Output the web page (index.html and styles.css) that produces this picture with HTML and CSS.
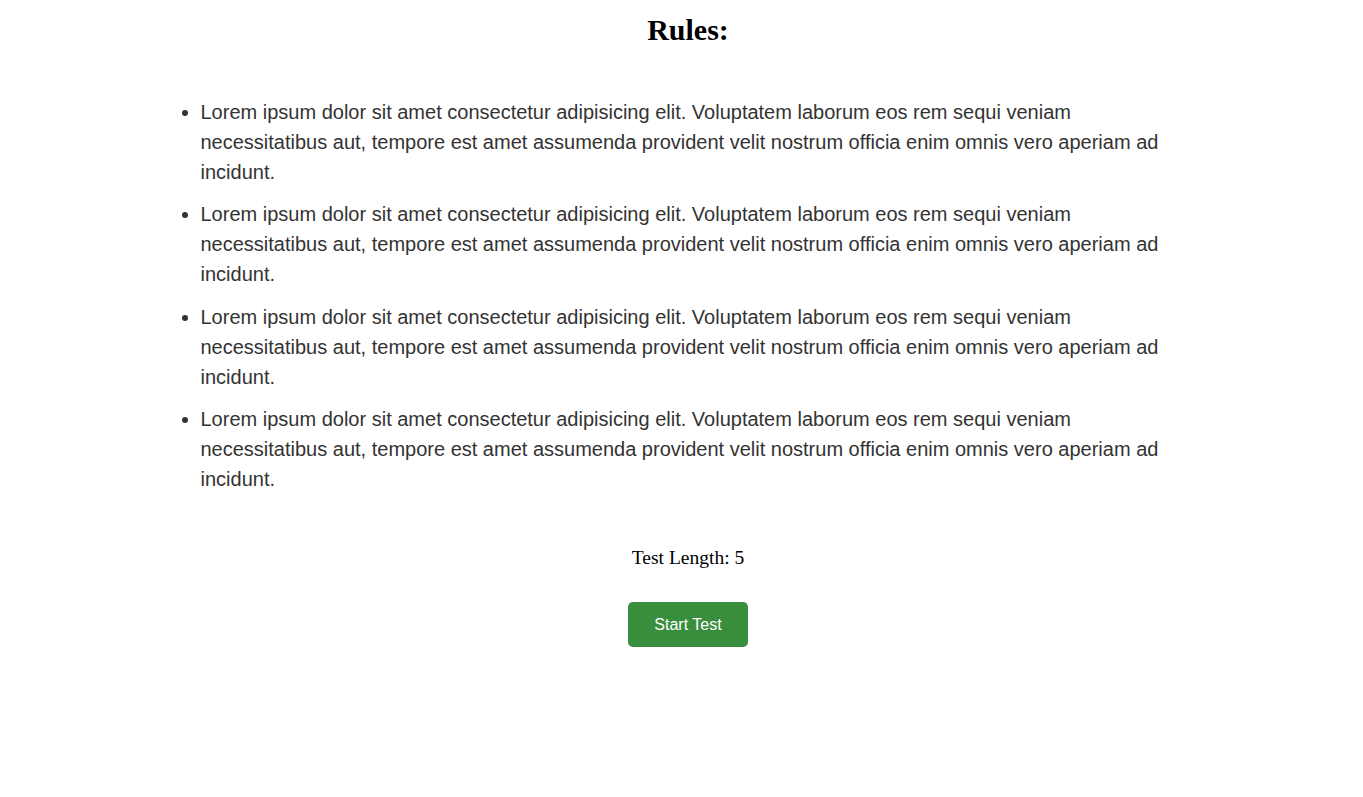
FILE: index.html
```html
<!DOCTYPE html>
<html lang="en">
<head>
<meta charset="utf-8">
<title>Rules</title>
<link rel="stylesheet" href="styles.css">
</head>
<body>
<main class="page">
  <h1 class="title">Rules:</h1>
  <section class="rules">
    <ul class="rules-list">
      <li>Lorem ipsum dolor sit amet consectetur adipisicing elit. Voluptatem laborum eos rem sequi veniam necessitatibus aut, tempore est amet assumenda provident velit nostrum officia enim omnis vero aperiam ad incidunt.</li>
      <li>Lorem ipsum dolor sit amet consectetur adipisicing elit. Voluptatem laborum eos rem sequi veniam necessitatibus aut, tempore est amet assumenda provident velit nostrum officia enim omnis vero aperiam ad incidunt.</li>
      <li>Lorem ipsum dolor sit amet consectetur adipisicing elit. Voluptatem laborum eos rem sequi veniam necessitatibus aut, tempore est amet assumenda provident velit nostrum officia enim omnis vero aperiam ad incidunt.</li>
      <li>Lorem ipsum dolor sit amet consectetur adipisicing elit. Voluptatem laborum eos rem sequi veniam necessitatibus aut, tempore est amet assumenda provident velit nostrum officia enim omnis vero aperiam ad incidunt.</li>
    </ul>
  </section>
  <div class="controls">
    <p class="length">Test Length: 5</p>
    <button class="start-btn" type="button">Start Test</button>
  </div>
</main>
</body>
</html>
```

FILE: styles.css
```css
html, body {
  margin: 0;
  padding: 0;
  background: #ffffff;
}

body {
  font-family: "Liberation Serif", "Times New Roman", serif;
  color: #000000;
}

.page {
  padding: 8px 8px 40px 21px;
}

.title {
  margin: 4px 0 0;
  text-align: center;
  font-size: 30px;
  font-weight: bold;
  line-height: 35px;
}

.rules {
  max-width: 1000px;
  margin: 50px auto 0;
  position: relative;
  left: -7.5px;
}

.rules-list {
  margin: 0;
  padding: 0 0 0 20px;
  font-family: "Liberation Sans", Arial, sans-serif;
  font-size: 20px;
  line-height: 30px;
  color: #333333;
}

.rules-list li {
  margin-bottom: 12.4px;
}

.controls {
  display: flex;
  flex-direction: column;
  align-items: center;
  margin-top: 53px;
}

.length {
  margin: 0;
  font-size: 19.5px;
  line-height: 22px;
}

.start-btn {
  margin-top: 33px;
  padding: 0 25px;
  height: 45px;
  width: 120px;
  border: none;
  border-radius: 5px;
  background: #388e3c;
  color: #ffffff;
  font-family: "Liberation Sans", Arial, sans-serif;
  font-size: 16px;
  line-height: 19px;
  cursor: pointer;
}
```
